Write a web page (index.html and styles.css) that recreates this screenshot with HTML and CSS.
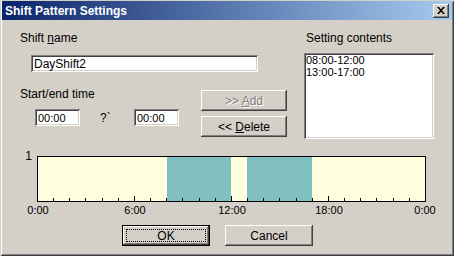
FILE: index.html
```html
<!DOCTYPE html>
<html lang="en">
<head>
<meta charset="UTF-8">
<title>Shift Pattern Settings</title>
<link rel="stylesheet" href="styles.css">
</head>
<body>

<div class="window">
    <div class="titlebar">
        <span class="title">Shift Pattern Settings</span>
        <button class="close">
            <svg width="8" height="7" viewBox="0 0 8 7">
                <path d="M0 0h2l2 2.2L6 0h2L5 3.5 8 7H6L4 4.8 2 7H0l3-3.5z" fill="#000"/>
            </svg>
        </button>
    </div>

    <div class="dialog">
        <div class="top">
            <div class="left">
                <label class="label" for="shiftName">Shift <u>n</u>ame</label>
                <input class="field name" id="shiftName" type="text" value="DayShift2">

                <div class="time-row">
                    <div class="time">
                        <div class="label">Start/end time</div>
                        <div class="time-inputs">
                            <input class="field time-field" type="text" value="00:00">
                            <span class="sep">?`</span>
                            <input class="field time-field" type="text" value="00:00">
                        </div>
                    </div>
                    <div class="buttons">
                        <button class="btn" disabled>&gt;&gt; <u>A</u>dd</button>
                        <button class="btn">&lt;&lt; <u>D</u>elete</button>
                    </div>
                </div>
            </div>

            <div class="right">
                <div class="label">Setting contents</div>
                <div class="listbox">
                    <div>08:00-12:00</div>
                    <div>13:00-17:00</div>
                </div>
            </div>
        </div>

        <!-- график смены: 24 часа, 16.17px на час -->
        <svg class="chart" width="420" height="70" viewBox="0 0 420 70">
            <text x="12" y="12" text-anchor="end">1</text>
            <rect x="17.5" y="8.5" width="388" height="45" fill="#ffffe0" stroke="#000"/>
            <rect x="147" y="9" width="64" height="44" fill="#80c0c0"/>
            <rect x="227" y="9" width="65" height="44" fill="#80c0c0"/>
            <g stroke="#000">
                <path d="M33.5 53v-3M49.5 53v-3M65.5 53v-3M82.5 53v-3M98.5 53v-3M114.5 53v-5"/>
                <path d="M130.5 53v-3M146.5 53v-3M162.5 53v-3M179.5 53v-3M195.5 53v-3M211.5 53v-5"/>
                <path d="M227.5 53v-3M243.5 53v-3M259.5 53v-3M276.5 53v-3M292.5 53v-3M308.5 53v-5"/>
                <path d="M324.5 53v-3M340.5 53v-3M356.5 53v-3M373.5 53v-3M389.5 53v-3"/>
            </g>
            <g class="axis" text-anchor="middle">
                <text x="18" y="66">0:00</text>
                <text x="115" y="66">6:00</text>
                <text x="212" y="66">12:00</text>
                <text x="309" y="66">18:00</text>
                <text x="405" y="66">0:00</text>
            </g>
        </svg>

        <div class="actions">
            <button class="btn default">OK</button>
            <button class="btn">Cancel</button>
        </div>
    </div>
</div>

</body>
</html>
```

FILE: styles.css
```css
body {
    margin: 0;
    font-family: "Liberation Sans", Arial, sans-serif;
    font-size: 12px;
    color: #000;
}
.window {
    width: 454px;
    height: 256px;
    box-sizing: border-box;
    padding: 1px 2px 2px;
    background: #d4d0c8;
    box-shadow: inset 1px 1px #d4d0c8, inset -1px -1px #404040,
                inset 2px 2px #fff, inset -2px -2px #808080;
}
.titlebar {
    height: 19px;
    display: flex;
    align-items: center;
    justify-content: space-between;
    padding: 0 3px 0 3px;
    background: linear-gradient(to right, #0a246a, #a6caf0);
    color: #fff;
    font-weight: bold;
}
.close {
    width: 16px;
    height: 14px;
    padding: 0;
    border: 0;
    background: #d4d0c8;
    display: flex;
    align-items: center;
    justify-content: center;
    box-shadow: inset -1px -1px #404040, inset 1px 1px #fff,
                inset -2px -2px #808080;
}
.dialog {
    padding: 11px 17px 0 18px;
}
.label {
    display: block;
    line-height: 14px;
}
.top {
    display: flex;
}
.left {
    width: 267px;
}
.field {
    display: block;
    height: 17px;
    box-sizing: border-box;
    border: 0;
    padding: 0 3px;
    font: inherit;
    background: #fff;
    outline: none;
    box-shadow: inset 1px 1px #808080, inset -1px -1px #fff,
                inset 2px 2px #404040, inset -2px -2px #d4d0c8;
}
.name {
    width: 227px;
    margin: 10px 0 0 11px;
}
.time-row {
    display: flex;
    margin-top: 15px;
}
.time {
    width: 181px;
}
.time-inputs {
    display: flex;
    align-items: center;
    margin-top: 8px;
}
.time-field {
    width: 45px;
    font-size: 11px;
}
.time-field:first-child {
    margin-left: 15px;
}
.sep {
    width: 34px;
    margin-left: 20px;
}
.buttons {
    display: flex;
    flex-direction: column;
    gap: 5px;
    margin-top: 3px;
}
.btn {
    width: 86px;
    height: 21px;
    box-sizing: border-box;
    padding: 0;
    border: 0;
    background: #d4d0c8;
    font: inherit;
    color: #000;
    box-shadow: inset -1px -1px #404040, inset 1px 1px #fff,
                inset -2px -2px #808080;
}
.btn:disabled {
    color: #808080;
    text-shadow: 1px 1px #fff;
}
.right {
    margin-left: 17px;
}
.right .label {
    padding-left: 2px;
}
.listbox {
    width: 130px;
    height: 86px;
    box-sizing: border-box;
    margin-top: 8px;
    padding: 1px 2px;
    background: #fff;
    font-size: 11px;
    line-height: 12px;
    box-shadow: inset 1px 1px #808080, inset -1px -1px #fff,
                inset 2px 2px #404040, inset -2px -2px #d4d0c8;
}
.chart {
    display: block;
    margin-top: 9px;
    font-family: "Liberation Sans", Arial, sans-serif;
    font-size: 12px;
}
.axis {
    font-size: 11px;
}
.actions {
    display: flex;
    gap: 15px;
    margin-top: 7px;
    padding-left: 102px;
}
.actions .btn {
    width: 88px;
}
.default {
    position: relative;
    border: 1px solid #000;
}
.default::after {
    content: "";
    position: absolute;
    inset: 3px;
    border: 1px dotted #000;
}
```
